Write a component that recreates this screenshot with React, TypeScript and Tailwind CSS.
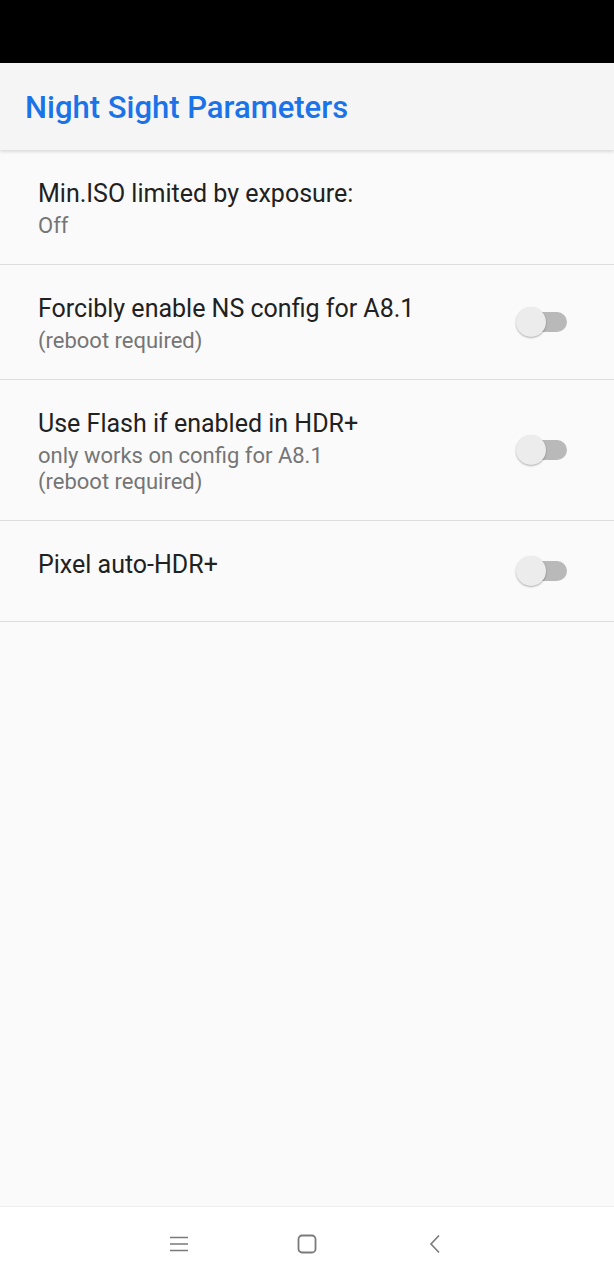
import React from 'react';

type Pref = {
  title: string;
  summary?: string[];
  toggle?: boolean;
};

const prefs: Pref[] = [
  { title: 'Min.ISO limited by exposure:', summary: ['Off'] },
  { title: 'Forcibly enable NS config for A8.1', summary: ['(reboot required)'], toggle: true },
  { title: 'Use Flash if enabled in HDR+', summary: ['only works on config for A8.1', '(reboot required)'], toggle: true },
  { title: 'Pixel auto-HDR+', toggle: true },
];

function Switch() {
  return (
    <div className="relative w-[52px] h-[30px] shrink-0">
      <div className="absolute left-[10px] top-[5px] w-[41px] h-[20px] rounded-full bg-[#b9b9b9]" />
      <div className="absolute left-0 top-0 w-[30px] h-[30px] rounded-full bg-[#ececec] shadow-[0_1px_2px_rgba(0,0,0,0.3)]" />
    </div>
  );
}

function PrefRow({ pref }: { pref: Pref }) {
  return (
    <div className="flex min-h-[101px] border-b border-[#dddddd]">
      <div className="flex-1 pl-[38px] pt-[25px] pb-[25px]">
        <div className="text-[25px] leading-[38px] text-[#212121]">{pref.title}</div>
        {pref.summary?.map((s, i) => (
          <div key={i} className="text-[22px] leading-[26px] text-[#757575]">{s}</div>
        ))}
      </div>
      {pref.toggle && (
        <div className="flex items-center pr-[46px]">
          <Switch />
        </div>
      )}
    </div>
  );
}

export default function App() {
  return (
    <div className="w-[614px] h-[1280px] flex flex-col bg-[#fafafa] font-['Roboto',sans-serif]">
      {/* status bar */}
      <div className="h-[63px] bg-black" />

      {/* toolbar */}
      <div className="relative z-10 h-[87px] flex items-center pl-[25px] pt-[4px] bg-[#f5f5f5] shadow-[0_2px_3px_rgba(0,0,0,0.12)]">
        <h1 className="text-[31px] font-medium text-[#1a73e8]">Night Sight Parameters</h1>
      </div>

      {/* preference list */}
      <div className="flex-1">
        {prefs.map((p, i) => (
          <PrefRow key={i} pref={p} />
        ))}
      </div>

      {/* nav bar */}
      <div className="h-[74px] bg-white border-t border-[#eeeeee] flex items-center justify-center gap-[88px]">
        <div className="w-[40px] flex justify-center">
          <svg width="20" height="18" viewBox="0 0 20 18" fill="none" stroke="#7a7a7a" strokeWidth="1.6">
            <path d="M1 2.5h18M1 9h18M1 15.5h18" />
          </svg>
        </div>
        <div className="w-[40px] flex justify-center">
          <svg width="20" height="20" viewBox="0 0 20 20" fill="none" stroke="#7a7a7a" strokeWidth="1.8">
            <rect x="1.5" y="1.5" width="17" height="17" rx="3.5" />
          </svg>
        </div>
        <div className="w-[40px] flex justify-center">
          <svg width="14" height="20" viewBox="0 0 14 20" fill="none" stroke="#7a7a7a" strokeWidth="1.6">
            <path d="M11 1.5L3 10l8 8.5" />
          </svg>
        </div>
      </div>
    </div>
  );
}
